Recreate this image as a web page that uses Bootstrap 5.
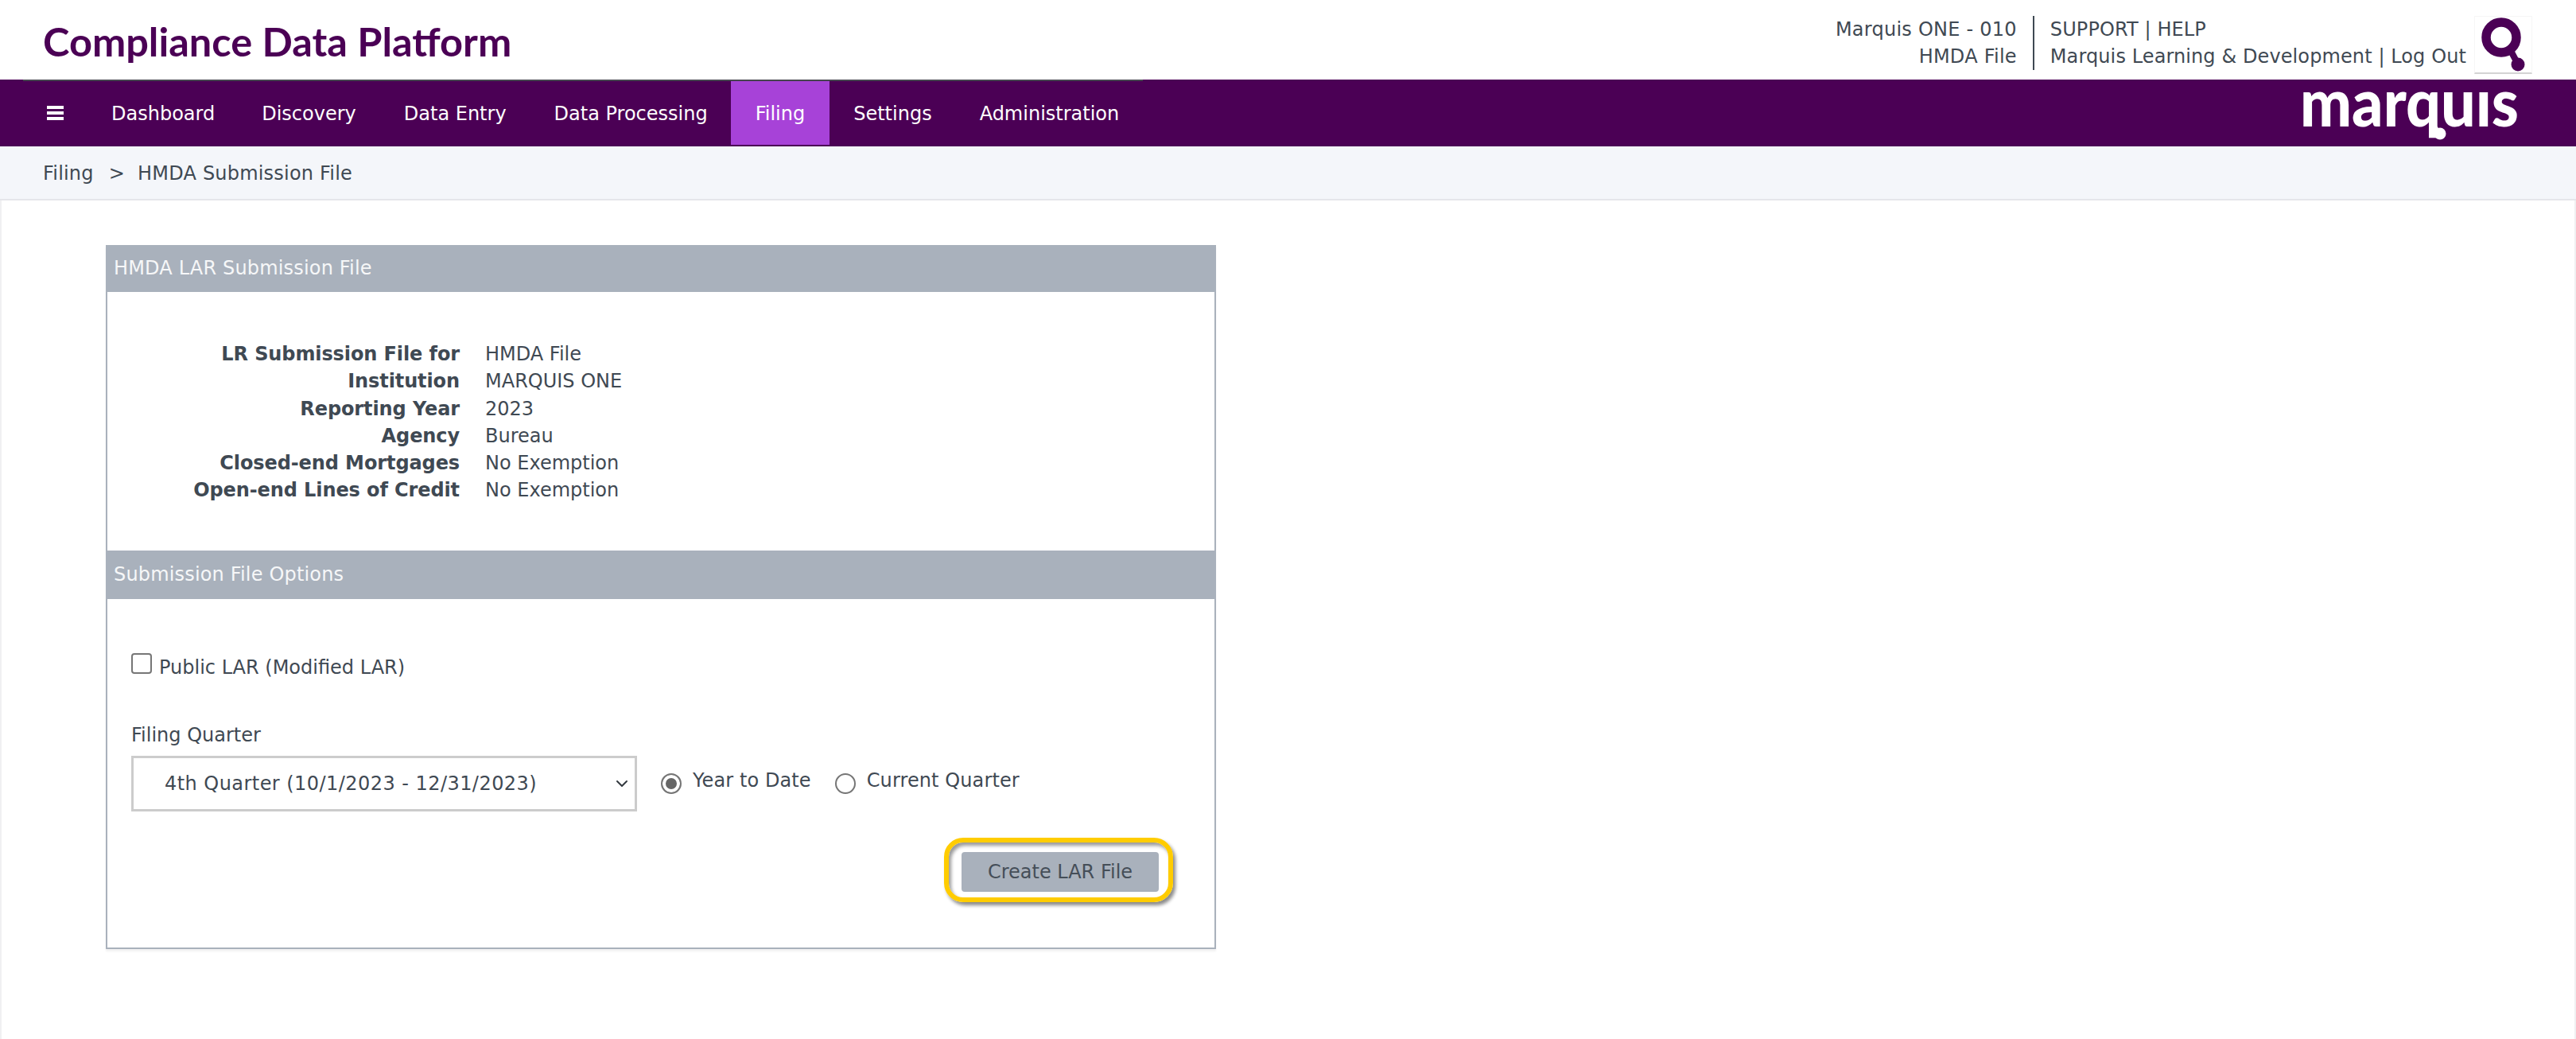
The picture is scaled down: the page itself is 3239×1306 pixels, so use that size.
<!DOCTYPE html>
<html lang="en"><head><meta charset="utf-8"><title>HMDA Submission File</title>
<link href="https://cdn.jsdelivr.net/npm/bootstrap@5.3.0/dist/css/bootstrap.min.css" rel="stylesheet">
<style>
body{font-family:"DejaVu Sans",sans-serif;font-size:24px;line-height:34.3px;color:#3f4953;background:#fff;min-height:1306px}
.app-head{height:100px;padding-left:54px;padding-right:55px}
.app-title{font-family:Lato,sans-serif;font-weight:700;font-size:50.5px;line-height:1;color:#4b0055;padding-top:4px}
.head-group{padding-top:20px;height:100px}
.head-left{padding-right:20px;border-right:2px solid #3f4953;height:68px;letter-spacing:.24px}
.head-right{padding-left:20px;height:68px;padding-right:10px;letter-spacing:.1px}
.q-box{width:73px;height:73px;border:1px solid #f6f6f6;border-bottom:2px solid #d4d4d4}
.nav-shell{height:84px;background:#4b0055}
.nav-rule{height:2px;margin-left:29px;width:1408px;background:#45454f}
.nav-row{height:82px;padding-left:59px;padding-right:72px}
.burger{width:21px;height:18px;margin-right:30px;margin-bottom:2px;display:flex;flex-direction:column;justify-content:space-between}
.burger i{display:block;height:4px;background:#fff}
.nav-item-link{display:flex;align-items:center;height:80px;margin-bottom:2px;padding:2px 30px 0;color:#fff;text-decoration:none}
.nav-item-link.trim{padding-right:29px}
.nav-item-link.is-on{background:#a742d8;padding:2px 31px 0;margin-left:-1px}
.word-logo{display:block;width:275px;height:75px;overflow:visible}
.word-logo text{font-family:Lato,sans-serif;font-weight:900;font-size:84px;fill:#fff}
.crumbs{height:68px;background:#f4f6fa;border-bottom:2px solid #e5e6ea;padding:2px 0 0 54px;letter-spacing:.2px}
.crumb-sep{margin:0 16px 0 19px}
.page-body{padding:56px 0 0 131px;border-left:2px solid #f0f0f2;border-right:2px solid #f0f0f2;min-height:1054px}
.sheet{width:1396px;height:885px;border:2px solid #a9b1bc;box-shadow:0 3px 2px #f2f2f2}
.sheet-head{background:#a9b1bc;color:#f6f7f8;padding-left:10px;margin:-2px -2px 0;letter-spacing:.17px}
.sheet-head.one{height:59px}
.sheet-head.two{height:61px;margin-top:0}
.facts{padding:61px 0 0;height:325px;margin:0}
.facts dt{width:443px;text-align:right;font-weight:700;letter-spacing:-.1px}
.facts dd{margin:0 0 0 32px}
.facts .fact-row{height:34.3px}
.opts{padding:0 0 0 30px}
.check-line{padding-top:69px;height:136px}
.box-check{width:26px;height:26px;border:2px solid #767676;border-radius:4px;margin-right:9px;margin-top:-1px}
.quarter-label{margin-top:18px;margin-bottom:9px}
.quarter-select{width:636px;height:70px;border:3px solid #ccc;border-radius:0;font-size:24px;letter-spacing:.45px;color:#3f4953;padding:0 40px 0 39px;background-position:right 5px center;background-size:22px 16px}
.radio-wrap{margin-left:30px;padding-top:14px;letter-spacing:.1px}
.radio-item{margin-right:30px}
.dot-radio{width:26px;height:26px;border:2px solid #767676;border-radius:50%;margin-right:14px;margin-top:8px}
.dot-radio.is-set{background:#666;box-shadow:inset 0 0 0 4px #fff}
.ring-row{padding-right:52px;margin-top:33px}
.ring{padding:12px 12px 7px 16px;border:6px solid #ffcc00;border-radius:24px;box-shadow:3px 4px 4px #8a8a8a,inset 3px 4px 4px #9a9a9a}
.lar-btn{display:block;width:248px;height:50px;background:#a9b1bc;color:#454e58;border:0;border-radius:4px;font-size:24px;padding:0;line-height:50px}
</style></head>
<body>
<header class="app-head d-flex align-items-center justify-content-between">
  <div class="app-title">Compliance Data Platform</div>
  <div class="head-group d-flex align-items-start">
    <div class="head-left text-end"><div>Marquis ONE - 010</div><div>HMDA File</div></div>
    <div class="head-right"><div>SUPPORT | HELP</div><div>Marquis Learning &amp; Development | Log Out</div></div>
    <div class="q-box">
      <svg width="71" height="71" viewBox="0 0 71 71"><circle cx="33" cy="26" r="19" fill="none" stroke="#4b0055" stroke-width="11.5"/><path d="M44 41 L52 56" stroke="#4b0055" stroke-width="8"/><circle cx="54" cy="60" r="8.5" fill="#4b0055"/></svg>
    </div>
  </div>
</header>
<nav class="nav-shell">
  <div class="nav-rule"></div>
  <div class="nav-row d-flex align-items-center justify-content-between">
    <div class="d-flex align-items-center">
      <div class="burger"><i></i><i></i><i></i></div>
      <a class="nav-item-link trim" href="#">Dashboard</a>
      <a class="nav-item-link" href="#">Discovery</a>
      <a class="nav-item-link" href="#">Data Entry</a>
      <a class="nav-item-link" href="#">Data Processing</a>
      <a class="nav-item-link is-on" href="#">Filing</a>
      <a class="nav-item-link" href="#">Settings</a>
      <a class="nav-item-link" href="#">Administration</a>
    </div>
    <svg class="word-logo" viewBox="0 0 275 75" aria-label="marquis"><text x="0" y="53" textLength="275" lengthAdjust="spacingAndGlyphs">marquıs</text><path d="M165 48 L174 60" stroke="#fff" stroke-width="6"/><circle cx="176" cy="62" r="7.5" fill="#fff"/></svg>
  </div>
</nav>
<div class="crumbs d-flex align-items-center"><span>Filing</span><span class="crumb-sep">&gt;</span><span>HMDA Submission File</span></div>
<main class="page-body">
  <section class="sheet">
    <div class="sheet-head one d-flex align-items-center">HMDA LAR Submission File</div>
    <dl class="facts">
      <div class="fact-row d-flex"><dt>LR Submission File for</dt><dd>HMDA File</dd></div>
      <div class="fact-row d-flex"><dt>Institution</dt><dd>MARQUIS ONE</dd></div>
      <div class="fact-row d-flex"><dt>Reporting Year</dt><dd>2023</dd></div>
      <div class="fact-row d-flex"><dt>Agency</dt><dd>Bureau</dd></div>
      <div class="fact-row d-flex"><dt>Closed-end Mortgages</dt><dd>No Exemption</dd></div>
      <div class="fact-row d-flex"><dt>Open-end Lines of Credit</dt><dd>No Exemption</dd></div>
    </dl>
    <div class="sheet-head two d-flex align-items-center">Submission File Options</div>
    <div class="opts">
      <div class="check-line d-flex align-items-start"><span class="box-check"></span><span>Public LAR (Modified LAR)</span></div>
      <div class="quarter-label">Filing Quarter</div>
      <div class="d-flex align-items-start">
        <select class="form-select quarter-select"><option>4th Quarter (10/1/2023 - 12/31/2023)</option></select>
        <div class="radio-wrap d-flex">
          <div class="radio-item d-flex"><span class="dot-radio is-set"></span><span>Year to Date</span></div>
          <div class="radio-item d-flex"><span class="dot-radio"></span><span>Current Quarter</span></div>
        </div>
      </div>
      <div class="ring-row d-flex justify-content-end"><div class="ring"><button class="btn lar-btn" type="button">Create LAR File</button></div></div>
    </div>
  </section>
</main>
</body></html>
